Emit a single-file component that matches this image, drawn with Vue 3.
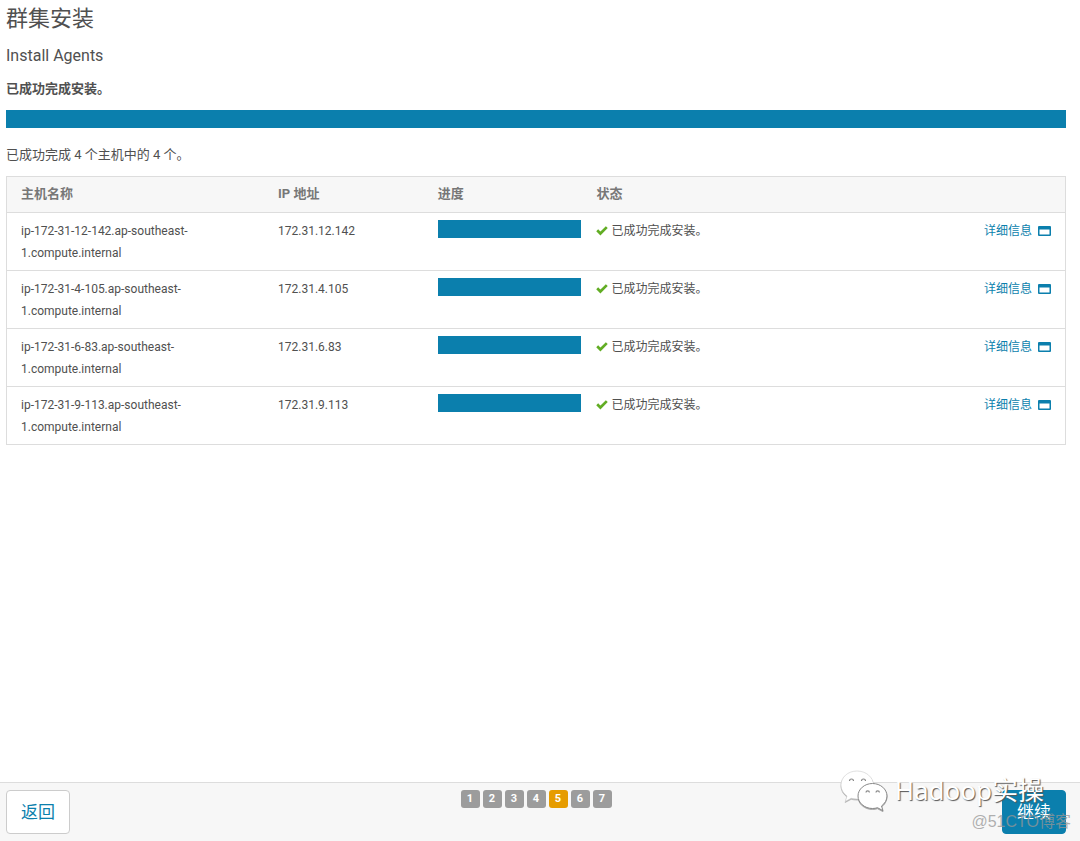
<script setup>
const hosts = [
  { node: 'ip-172-31-12-142', ip: '172.31.12.142', progress: 100 },
  { node: 'ip-172-31-4-105', ip: '172.31.4.105', progress: 100 },
  { node: 'ip-172-31-6-83', ip: '172.31.6.83', progress: 100 },
  { node: 'ip-172-31-9-113', ip: '172.31.9.113', progress: 100 },
]
const steps = [1, 2, 3, 4, 5, 6, 7]
const currentStep = 5
const overall = 100
</script>

<template>
  <div class="page">
    <main class="content">
      <h1>群集安装</h1>
      <h2>Install Agents</h2>
      <p class="result">已成功完成安装。</p>
      <div class="track" role="progressbar" :aria-valuenow="overall" aria-label="安装进度">
        <div class="fill" :style="{ width: overall + '%' }"></div>
      </div>
      <p class="summary">已成功完成 4 个主机中的 4 个。</p>

      <table>
        <colgroup>
          <col class="col-host" />
          <col class="col-ip" />
          <col class="col-progress" />
          <col />
          <col class="col-link" />
        </colgroup>
        <thead>
          <tr>
            <th scope="col">主机名称</th>
            <th scope="col">IP 地址</th>
            <th scope="col">进度</th>
            <th scope="col" colspan="2">状态</th>
          </tr>
        </thead>
        <tbody>
          <tr v-for="host in hosts" :key="host.ip">
            <td>{{ host.node }}.ap-southeast-<wbr />1.compute.internal</td>
            <td>{{ host.ip }}</td>
            <td class="progress-cell">
              <div class="track" role="progressbar" :aria-valuenow="host.progress" :aria-label="host.node">
                <div class="fill" :style="{ width: host.progress + '%' }"></div>
              </div>
            </td>
            <td>
              <span class="status">
                <svg width="12" height="10" viewBox="0 0 12 10" aria-hidden="true">
                  <path d="M1.2 4.300 4.400 7.500 10.800 1.100" fill="none" stroke="#62ad24" stroke-width="2.7" />
                </svg>
                已成功完成安装。
              </span>
            </td>
            <td>
              <a class="details" href="#">
                详细信息
                <svg width="13" height="11" viewBox="0 0 13 11" aria-hidden="true">
                  <path fill="#0b7fad" fill-rule="evenodd" d="M1 0h11a1 1 0 0 1 1 1v8a1 1 0 0 1-1 1H1a1 1 0 0 1-1-1V1a1 1 0 0 1 1-1zM1.5 3.500v5h10v-5z" />
                </svg>
              </a>
            </td>
          </tr>
        </tbody>
      </table>
    </main>

    <footer>
      <button type="button" class="btn">返回</button>
      <ol class="steps">
        <li v-for="step in steps" :key="step" :class="{ active: step === currentStep }">{{ step }}</li>
      </ol>
      <button type="button" class="btn primary">继续</button>

      <div class="brand">
        <svg class="bubbles" width="48" height="42" viewBox="0 0 48 42" aria-hidden="true">
          <g fill="#fff" stroke="#ccc" stroke-width="0.6">
            <path d="M17 1C8 1 1 7.200 1 15c0 4.500 2.300 8.300 6 11l-1.800 5.500 6-3.200c1.800.5 3.800.8 5.800.8 9 0 16.500-6.200 16.500-14S26 1 17 1z" />
            <path stroke="#888" stroke-width="1" d="M32.500 13.500c-8 0-14.500 5.700-14.500 12.500s6.500 12.500 14.500 12.500c1.800 0 3.500-.3 5-.8l5.500 3-1.500-4.700c3.200-2.300 5.500-5.900 5.500-10 0-6.800-6.500-12.500-14.500-12.500z" />
          </g>
          <g fill="none" stroke="#888" stroke-width="1.200">
            <path d="M9.500 11a2 2 0 0 1 4 0M21.500 11a2 2 0 0 1 4 0M26 22.500a1.700 1.700 0 0 1 3.400 0M36 22.500a1.700 1.700 0 0 1 3.400 0" />
          </g>
        </svg>
        <span>Hadoop实操</span>
      </div>
      <span class="credit">@51CTO博客</span>
    </footer>
  </div>
</template>

<style>
body {
  margin: 0;
}
</style>

<style scoped>
.page {
  display: flex;
  flex-direction: column;
  min-height: 100vh;
  color: #505050;
  background: #fff;
  font-family: Roboto, "Noto Sans CJK SC", sans-serif;
  font-size: 13px;
  line-height: 22px;
}
.content {
  flex: 1;
  padding: 4px 14px 0 6px;
}
h1,
h2,
p {
  margin: 0;
}
h1 {
  font-size: 22px;
  font-weight: 400;
  line-height: 30px;
}
h2 {
  margin-top: 10px;
  font-size: 16px;
  font-weight: 400;
  line-height: 24px;
}
.result {
  margin: 10px 0;
  font-weight: 700;
}
.track {
  height: 18px;
  background: #eee;
}
.fill {
  height: 100%;
  background: #0b7fad;
}
.summary {
  margin: 16px 0 10px;
}
table {
  width: 100%;
  table-layout: fixed;
  border-collapse: separate;
  border-spacing: 0;
  border: 1px solid #ddd;
  border-bottom: 0;
}
.col-host {
  width: 257px;
}
.col-ip,
.col-progress {
  width: 15%;
}
.col-link {
  width: 120px;
}
th,
td {
  text-align: left;
  vertical-align: top;
  border-bottom: 1px solid #ddd;
}
th {
  padding: 6px 14px 7px;
  color: #777;
  background: #f7f7f7;
  font-weight: 700;
}
td {
  padding: 7px 14px 6px;
  font-size: 12px;
}
th:nth-child(n + 3),
td:nth-child(n + 3) {
  padding-left: 15px;
}
td.progress-cell {
  padding-right: 0;
}
.status,
.details {
  display: flex;
  align-items: center;
  gap: 3px;
  white-space: nowrap;
}
.details {
  justify-content: flex-end;
  gap: 6px;
  color: #0b7fad;
  text-decoration: none;
}
footer {
  position: relative;
  display: flex;
  justify-content: space-between;
  align-items: flex-start;
  padding: 7px 14px 7px 6px;
  border-top: 1px solid #ddd;
  background: #f7f7f7;
}
.btn {
  padding: 8px 14px;
  border: 1px solid #ccc;
  border-radius: 4px;
  color: #0b7fad;
  background: #fff;
  font-family: inherit;
  font-size: 17px;
  line-height: 26px;
}
.primary {
  border-color: #0b7fad;
  color: #fff;
  background: #0b7fad;
}
.steps {
  display: flex;
  gap: 3px;
  margin: 0;
  padding: 0;
  list-style: none;
}
.steps li {
  width: 19px;
  border-radius: 3px;
  color: #fff;
  background: #9c9c9c;
  font-size: 11px;
  font-weight: 700;
  line-height: 18px;
  text-align: center;
}
.steps .active {
  background: #e69c00;
}
.brand {
  position: absolute;
  top: -13px;
  right: 36px;
  display: flex;
  gap: 7px;
  color: #fff;
  font-family: "Noto Sans", "Noto Sans CJK SC", sans-serif;
  font-size: 26px;
  line-height: 40px;
  text-shadow: 1px 1px 1px #555;
  pointer-events: none;
}
.bubbles {
  filter: drop-shadow(0 1px 0 #aaa);
}
.credit {
  position: absolute;
  right: 9px;
  bottom: 8px;
  color: rgba(150, 150, 150, 0.75);
  font-family: "Liberation Sans", "Noto Sans CJK SC", sans-serif;
  font-size: 16px;
  pointer-events: none;
}
</style>
